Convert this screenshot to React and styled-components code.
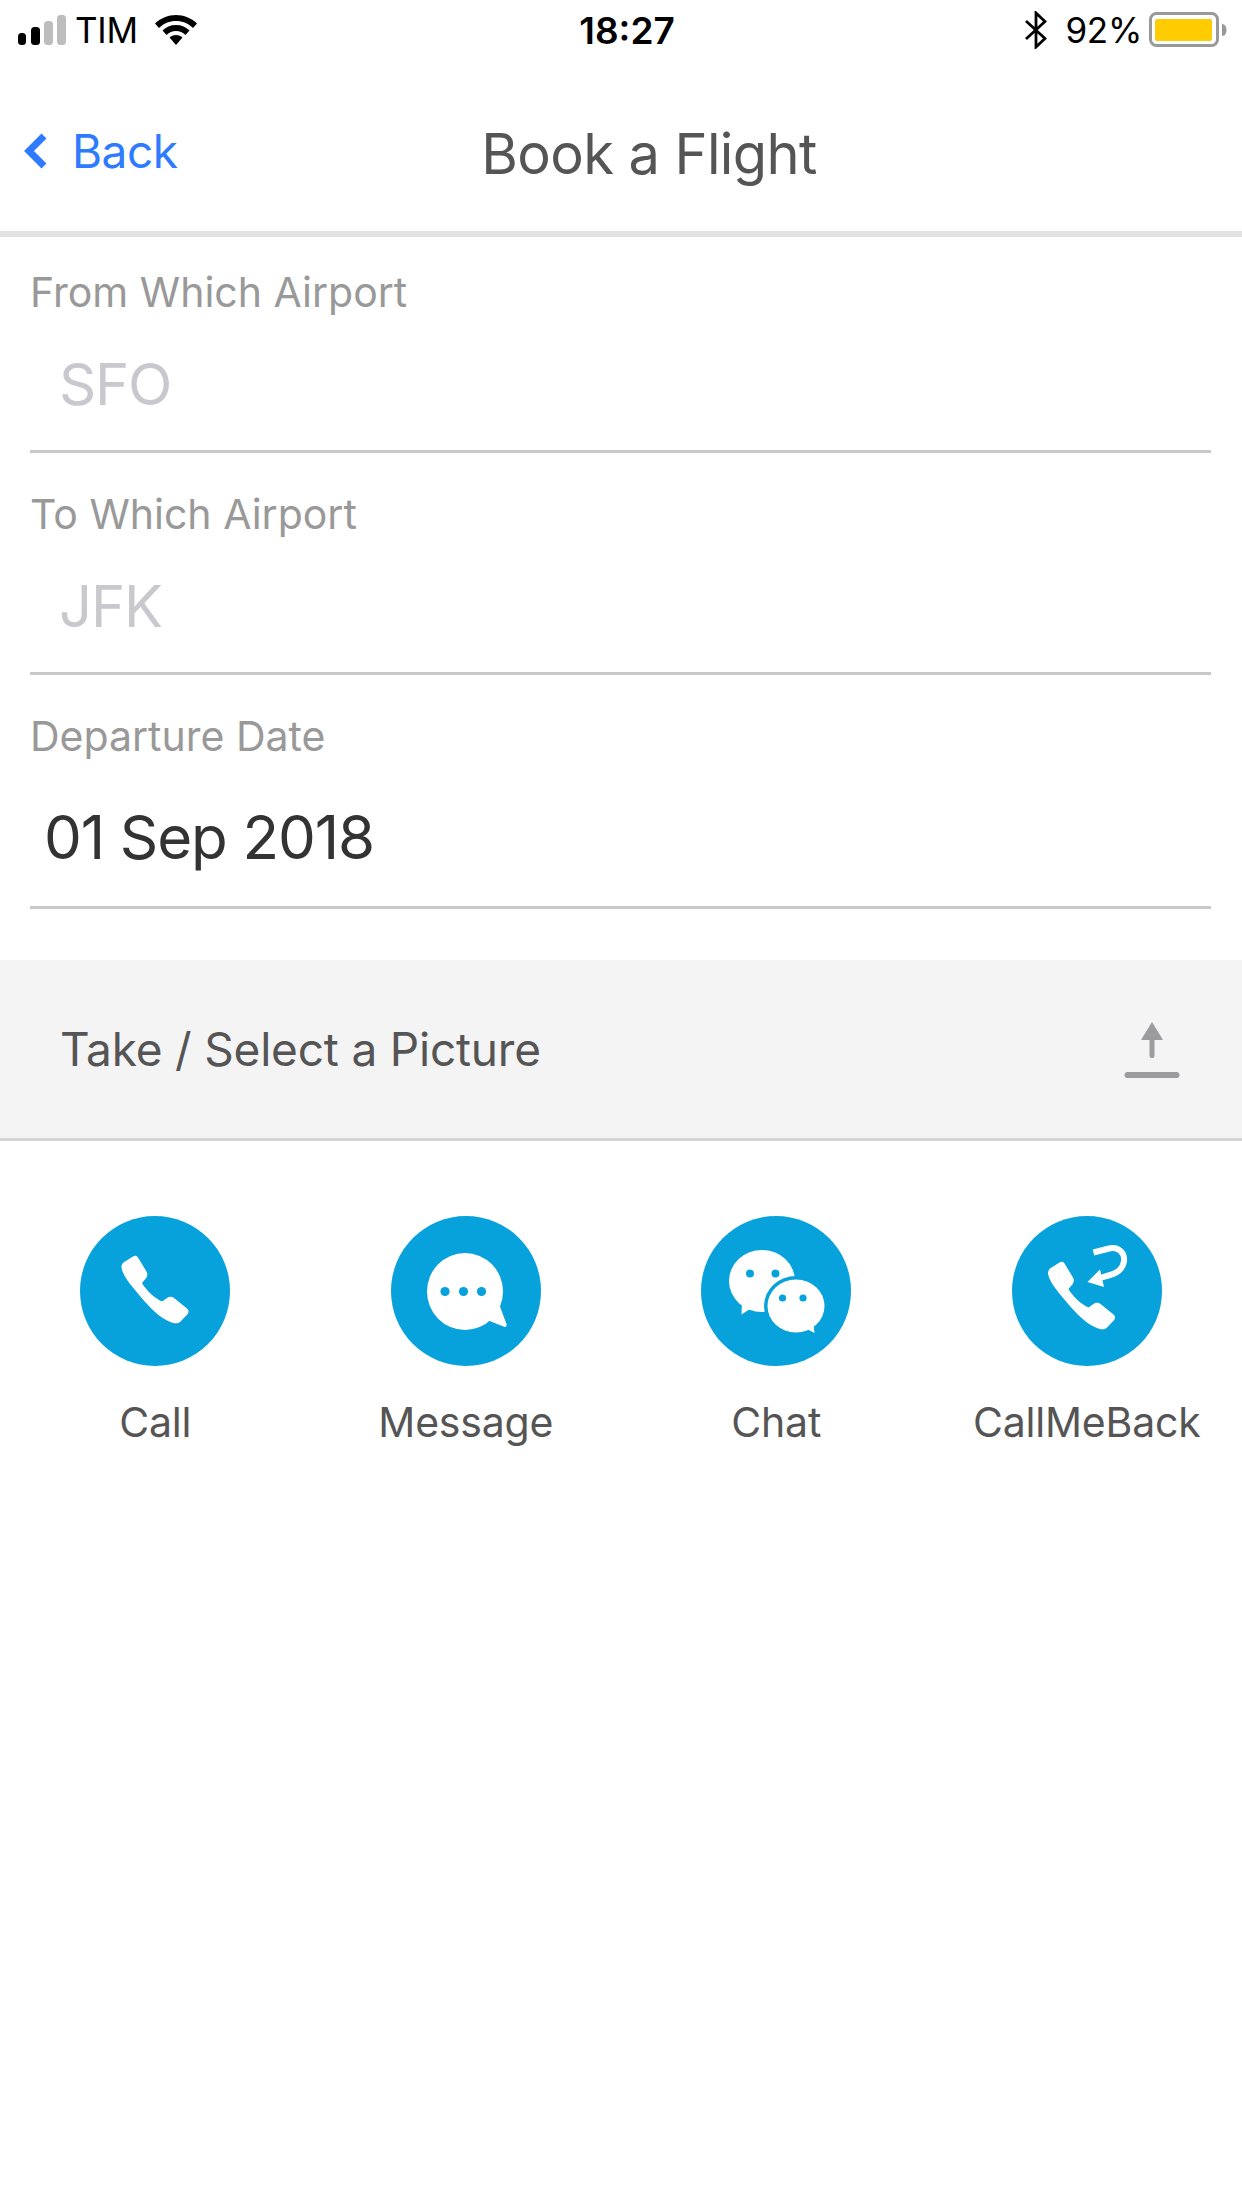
import React from "react";
import styled, { createGlobalStyle } from "styled-components";

const Global = createGlobalStyle`
  html, body { margin: 0; padding: 0; background: #fff; }
  #root { width: 1242px; height: 2208px; }
  * { box-sizing: border-box; }
`;

const Page = styled.div`
  width: 1242px;
  height: 2208px;
  background: #fff;
  font-family: Inter, "Liberation Sans", sans-serif;
  overflow: hidden;
`;

const StatusBar = styled.div`
  height: 60px;
  padding: 0 15px 0 18px;
  display: grid;
  grid-template-columns: 1fr auto 1fr;
  align-items: center;
  color: #000;
  font-size: 35px;
`;
const StatusLeft = styled.div`
  display: flex;
  align-items: center;
`;
const StatusRight = styled.div`
  display: flex;
  align-items: center;
  justify-content: flex-end;
`;
const Carrier = styled.span`
  margin: 0 17px 0 9px;
  letter-spacing: -0.3px;
`;
const Clock = styled.span`
  font-weight: 600;
  font-size: 37px;
  margin-left: 9px;
`;
const Percent = styled.span`
  margin: 0 7px 0 18px;
  letter-spacing: -0.3px;
`;

const NavBar = styled.div`
  height: 177px;
  border-bottom: 6px solid #e2e2e2;
  display: flex;
  align-items: center;
  position: relative;
  padding: 10px 0 0 24px;
`;
const BackLink = styled.div`
  display: flex;
  align-items: center;
  gap: 24px;
  color: #2e7bff;
  font-size: 46px;
  letter-spacing: -0.5px;
`;
const Title = styled.div`
  position: absolute;
  left: 0;
  right: 0;
  top: 60px;
  padding-left: 56px;
  text-align: center;
  color: #555;
  font-size: 56px;
  letter-spacing: -0.6px;
`;

const Form = styled.div`
  padding: 0 31px 0 30px;
`;
const Field = styled.div`
  height: ${(p) => p.$h}px;
  border-bottom: 3px solid #c9c9c9;
  display: flex;
  flex-direction: column;
`;
const FieldLabel = styled.div`
  margin-top: ${(p) => p.$top}px;
  height: 46px;
  line-height: 46px;
  font-size: 41px;
  color: #999;
`;
const Placeholder = styled.div`
  margin-top: 35px;
  padding-left: 29px;
  height: 68px;
  line-height: 68px;
  font-size: 58px;
  color: #c8c8ce;
  letter-spacing: -1.2px;
`;
const Value = styled.div`
  margin-top: 44px;
  padding-left: 14px;
  height: 68px;
  line-height: 68px;
  font-size: 60px;
  color: #333;
  letter-spacing: -1.1px;
`;

const UploadRow = styled.div`
  margin-top: 51px;
  height: 181px;
  background: #f5f4f5;
  border-bottom: 3px solid #d4d4d4;
  padding: 0 62px 0 60px;
  display: flex;
  align-items: center;
  justify-content: space-between;
  color: #555;
  font-size: 46px;
  letter-spacing: -0.2px;
`;

const Actions = styled.div`
  display: grid;
  grid-template-columns: repeat(4, 1fr);
  padding-top: 75px;
`;
const Action = styled.div`
  display: flex;
  flex-direction: column;
  align-items: center;
`;
const Circle = styled.div`
  width: 150px;
  height: 150px;
  border-radius: 50%;
  background: #07a2dc;
  display: flex;
`;
const ActionLabel = styled.div`
  margin-top: 29px;
  height: 54px;
  line-height: 54px;
  font-size: 41px;
  color: #555;
  letter-spacing: -0.2px;
  white-space: nowrap;
`;

const PHONE =
  "M53 40.5C55 39.3 57 39.8 58 41.5L66.5 55.5C67.8 57.8 67.6 59.8 66 62.3L62 67C66 74 74 82 82 85.5L87 82C89 80.3 92 80.3 94 82L107 92.5C109 94.3 109 96.3 107.5 98.3L100 106C97.5 108 94 107.5 90.5 106C80 102 70 92 60 80C50 68 43 60 41.6 52C41.2 50 42 48 43.5 46.5Z";

const PhoneIcon = () => (
  <svg width="150" height="150" viewBox="0 0 150 150">
    <path d={PHONE} fill="#fff" />
  </svg>
);
const MessageIcon = () => (
  <svg width="150" height="150" viewBox="0 0 150 150">
    <ellipse cx="74" cy="75.5" rx="38" ry="38.5" fill="#fff" />
    <path d="M108 88L115.500 108C116 110.500 114.500 111.500 112.500 110.500L96 104Z" fill="#fff" />
    <circle cx="54" cy="75.5" r="4.6" fill="#07a2dc" />
    <circle cx="72.5" cy="75.5" r="4.6" fill="#07a2dc" />
    <circle cx="90.5" cy="75.5" r="4.6" fill="#07a2dc" />
  </svg>
);
const ChatIcon = () => (
  <svg width="150" height="150" viewBox="0 0 150 150">
    <ellipse cx="61" cy="65" rx="33" ry="31" fill="#fff" />
    <path d="M41 84L40.500 98.500L52 91L66 92Z" fill="#fff" />
    <circle cx="49" cy="57.5" r="4" fill="#07a2dc" />
    <circle cx="74.5" cy="57.5" r="4" fill="#07a2dc" />
    <ellipse cx="95" cy="90" rx="32" ry="30" fill="#07a2dc" />
    <ellipse cx="95" cy="90" rx="28.5" ry="26.500" fill="#fff" />
    <path d="M112 103L113.500 117L104 112Z" fill="#fff" />
    <circle cx="81.5" cy="82" r="3.6" fill="#07a2dc" />
    <circle cx="102" cy="82" r="3.6" fill="#07a2dc" />
  </svg>
);
const CallBackIcon = () => (
  <svg width="150" height="150" viewBox="0 0 150 150">
    <path d={PHONE} fill="#fff" transform="translate(-5.5 6)" />
    <path d="M81.500 36.500L97 32.500C106 30.500 113 36.500 112 45C111 53 105 57 98 59L88 62" fill="none" stroke="#fff" strokeWidth="6" />
    <path d="M75.500 66L88 53.500L92 71Z" fill="#fff" />
  </svg>
);
const UploadIcon = () => (
  <svg width="56" height="58" viewBox="0 0 56 58">
    <path d="M28 2L39 20H17Z" fill="#9c9ba0" />
    <rect x="25.5" y="17" width="5" height="21" rx="2.5" fill="#9c9ba0" />
    <rect x="0.5" y="52" width="55" height="6" rx="3" fill="#9c9ba0" />
  </svg>
);
const Signal = () => (
  <svg width="48" height="30" viewBox="0 0 48 30">
    <rect x="0" y="18" width="8" height="12" rx="3.5" fill="#000" />
    <rect x="13" y="12" width="9" height="18" rx="3.5" fill="#000" />
    <rect x="26" y="6" width="9" height="24" rx="3.5" fill="#bdbdbd" />
    <rect x="39" y="0" width="9" height="30" rx="3.5" fill="#bdbdbd" />
  </svg>
);
const Wifi = () => (
  <svg width="42" height="30" viewBox="0 0 42 30">
    <path d="M21 0C13 0 6 3 0 8.500L4 13C8.500 8.500 14.500 6 21 6S33.500 8.500 38 13L42 8.500C36 3 29 0 21 0Z" fill="#000" />
    <path d="M21 10C15.500 10 11 12 7.500 15.500L11.500 20C14 17.500 17.500 16 21 16S28 17.500 30.500 20L34.500 15.500C31 12 26.500 10 21 10Z" fill="#000" />
    <path d="M21 20C18.500 20 16 21 14.500 22.500L21 30L27.500 22.500C26 21 23.500 20 21 20Z" fill="#000" />
  </svg>
);
const Bluetooth = () => (
  <svg width="22" height="38" viewBox="0 0 22 38">
    <path d="M1 10L20 27.500L11 36V2L20 10.500L1 28" fill="none" stroke="#000" strokeWidth="2.8" />
  </svg>
);
const Battery = () => (
  <svg width="78" height="36" viewBox="0 0 78 36">
    <rect x="1.5" y="1.500" width="67" height="32" rx="6" fill="none" stroke="#999" strokeWidth="3" />
    <rect x="6" y="7" width="57" height="22" rx="2" fill="#ffcc00" />
    <path d="M73 12C76 12 77.500 15 77.500 18S76 24 73 24Z" fill="#999" />
  </svg>
);
const Chevron = () => (
  <svg width="24" height="36" viewBox="0 0 24 36">
    <path d="M20 3L5 18L20 33" fill="none" stroke="#2e7bff" strokeWidth="7" />
  </svg>
);

const ACTIONS = [
  { label: "Call", Icon: PhoneIcon },
  { label: "Message", Icon: MessageIcon },
  { label: "Chat", Icon: ChatIcon },
  { label: "CallMeBack", Icon: CallBackIcon },
];

export default function App() {
  return (
    <Page>
      <Global />
      <StatusBar>
        <StatusLeft>
          <Signal />
          <Carrier>TIM</Carrier>
          <Wifi />
        </StatusLeft>
        <Clock>18:27</Clock>
        <StatusRight>
          <Bluetooth />
          <Percent>92%</Percent>
          <Battery />
        </StatusRight>
      </StatusBar>
      <NavBar>
        <BackLink>
          <Chevron />
          <span>Back</span>
        </BackLink>
        <Title>Book a Flight</Title>
      </NavBar>
      <Form>
        <Field $h={216}>
          <FieldLabel $top={32}>From Which Airport</FieldLabel>
          <Placeholder>SFO</Placeholder>
        </Field>
        <Field $h={222}>
          <FieldLabel $top={38}>To Which Airport</FieldLabel>
          <Placeholder>JFK</Placeholder>
        </Field>
        <Field $h={234}>
          <FieldLabel $top={38}>Departure Date</FieldLabel>
          <Value>01 Sep 2018</Value>
        </Field>
      </Form>
      <UploadRow>
        <span>Take / Select a Picture</span>
        <UploadIcon />
      </UploadRow>
      <Actions>
        {ACTIONS.map(({ label, Icon }) => (
          <Action key={label}>
            <Circle>
              <Icon />
            </Circle>
            <ActionLabel>{label}</ActionLabel>
          </Action>
        ))}
      </Actions>
    </Page>
  );
}
